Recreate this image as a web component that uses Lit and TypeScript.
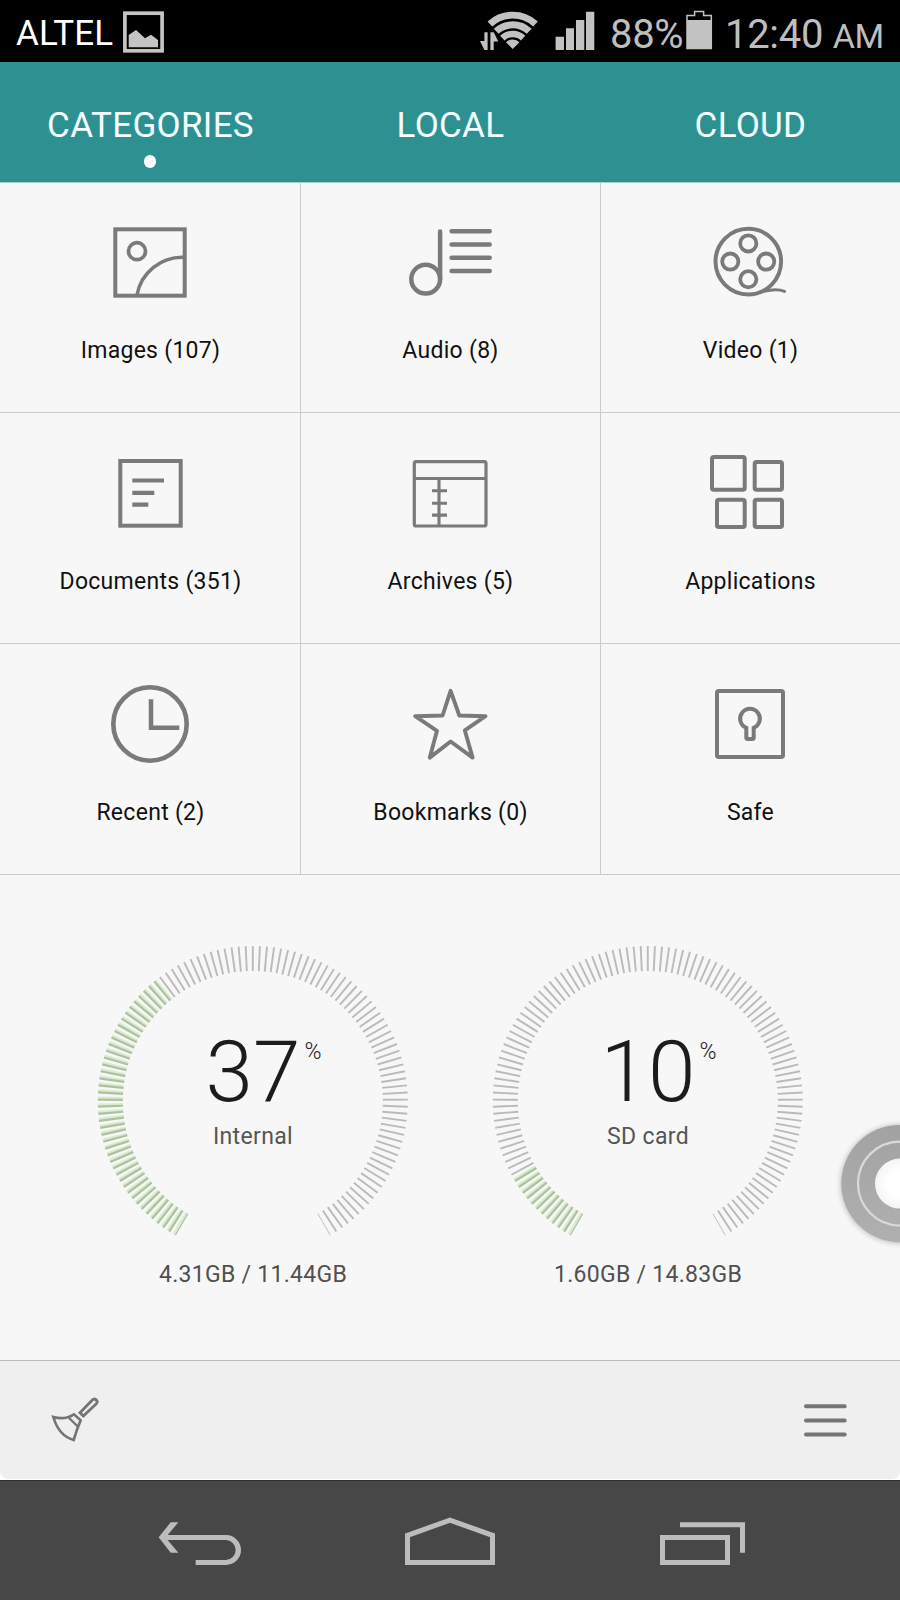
import { LitElement, html, css, svg, SVGTemplateResult } from "lit";
import { customElement, property } from "lit/decorators.js";

interface Category {
  label: string;
  box: string;
  icon: SVGTemplateResult;
}

const categories: Category[] = [
  {
    label: "Images (107)",
    box: "100 212 100 100",
    icon: svg`<rect x="115.3" y="229.3" width="69.4" height="66.4" stroke-width="4"/>
      <circle cx="137" cy="251.2" r="8.5" stroke-width="3.7"/>
      <path d="M184 257.3A46 46 0 0 0 137 295" stroke-width="3.6"/>`,
  },
  {
    label: "Audio (8)",
    box: "400 212 100 100",
    icon: svg`<g stroke-width="4.5" stroke-linecap="round"><circle cx="425.7" cy="279.2" r="14.4"/>
      <path d="M440.1 279V231.5M451.6 231.3H489.7M451.6 244.5H489.7M451.6 257.8H489.7M451.6 270.9H489.7"/></g>`,
  },
  {
    label: "Video (1)",
    box: "700 212 100 100",
    icon: svg`<circle cx="748.3" cy="261.6" r="32.8" stroke-width="4"/>
      <g stroke-width="3.8"><circle cx="748.3" cy="243.4" r="8.1"/><circle cx="730.3" cy="261.6" r="8.1"/>
      <circle cx="766.2" cy="261.6" r="8.1"/><circle cx="748.3" cy="279.3" r="8.1"/></g>
      <path d="M761 292C767 290 778 288.6 784.5 291.4" stroke-width="3" stroke-linecap="round"/>`,
  },
  {
    label: "Documents (351)",
    box: "100 443 100 100",
    icon: svg`<rect x="120.3" y="461" width="60.4" height="64.7" stroke-width="4"/>
      <path d="M132.3 480.5H164M132.3 492.8H154.3M132.3 504.7H148.3" stroke-width="4.2"/>`,
  },
  {
    label: "Archives (5)",
    box: "400 443 100 100",
    icon: svg`<rect x="414.3" y="461.7" width="71.7" height="64.3" rx="1.8" stroke-width="3.2"/>
      <path d="M414 478.5H486M439 478.5V526M432 490.8H447M432 503.3H447M432 515.1H447" stroke-width="3.1"/>`,
  },
  {
    label: "Applications",
    box: "700 443 100 100",
    icon: svg`<g stroke-width="4"><rect x="712" y="457" width="32.7" height="32.7" rx="1.8"/>
      <rect x="754.7" y="462" width="27.3" height="27.7" rx="1.8"/>
      <rect x="717" y="499.7" width="27.7" height="27.3" rx="1.8"/>
      <rect x="754.7" y="499.7" width="27.3" height="27.3" rx="1.8"/></g>`,
  },
  {
    label: "Recent (2)",
    box: "100 674 100 100",
    icon: svg`<circle cx="150" cy="724" r="36.7" stroke-width="4.6"/>
      <path d="M151 699.3V727.7H179.3" stroke-width="4.5"/>`,
  },
  {
    label: "Bookmarks (0)",
    box: "400 674 100 100",
    icon: svg`<path d="M450.6 690.8L459.3 715.5L485.5 716.2L464.8 730.3L472.6 757.6L450.6 741.5L429.8 757.6L437 730.8L415.2 716.2L442.6 715.5Z" stroke-width="3.9" stroke-linejoin="round"/>`,
  },
  {
    label: "Safe",
    box: "700 674 100 100",
    icon: svg`<rect x="717" y="691" width="66" height="66" rx="1.8" stroke-width="4"/>
      <path d="M746.3 727.9A9.9 9.9 0 1 1 753.7 727.9V737.5Q753.7 739 752.2 739H747.8Q746.3 739 746.3 737.5Z" stroke-width="4"/>`,
  },
];

@customElement("storage-gauge")
class StorageGauge extends LitElement {
  @property({ type: Number }) percent = 0;
  @property() name = "";
  @property() usage = "";

  static styles = css`
    :host { display: grid; grid-template-columns: 310px; grid-template-rows: 310px 30px; justify-items: center; }
    .dial { grid-area: 1 / 1; width: 310px; height: 310px; display: block; overflow: visible; }
    .text { grid-area: 1 / 1; text-align: center; padding-top: 76px; }
    .value { position: relative; display: inline-block; font-size: 85.5px; line-height: 100px; font-weight: 300; color: #1c1c1c; }
    .sign { position: absolute; left: 100%; top: 15px; margin-left: 4px; font-size: 23px; line-height: 30px; color: #222; }
    .name { font-size: 23px; line-height: 30px; letter-spacing: 0.35px; color: #555; }
    .usage { font-size: 23px; line-height: 30px; letter-spacing: 0.28px; color: #505050; margin-top: 4px; }
  `;

  render() {
    const steps = 114;
    const filled = Math.round((steps * this.percent) / 100);
    const ticks = Array.from({ length: steps + 1 }, (_, i) => {
      const a = ((-150 + (i * 300) / steps) * Math.PI) / 180;
      const on = i <= filled;
      const edge = i === 0 || i === steps;
      const line = (da: number, color: string, w: number) => {
        const x = Math.sin(a + da);
        const y = -Math.cos(a + da);
        return svg`<line x1=${154.8 + 130 * x} y1=${155 + 130 * y} x2=${154.8 + 155 * x} y2=${155 + 155 * y} stroke=${color} stroke-width=${w}/>`;
      };
      return on
        ? svg`${line(0.011, "#dcead2", 2.8)}${line(0, "#abc39c", edge ? 1.2 : 2.2)}`
        : line(0, "#bababa", edge ? 0.9 : 1.9);
    });
    return html`
      <svg class="dial" viewBox="0 0 310 310">${ticks}</svg>
      <div class="text">
        <div class="value">${this.percent}<span class="sign">%</span></div>
        <div class="name">${this.name}</div>
      </div>
      <div class="usage">${this.usage}</div>
    `;
  }
}

@customElement("app-root")
class AppRoot extends LitElement {
  static styles = css`
    :host { display: block; width: 900px; height: 1600px; overflow: hidden; position: relative; font-family: Roboto, "Liberation Sans", sans-serif; background: #f7f7f7; }
    svg { display: block; flex: none; }
    .status { height: 62px; background: #000; display: flex; box-sizing: border-box; padding-left: 16px; color: #bebebe; line-height: 62px; white-space: nowrap; }
    .carrier { width: 106px; font-size: 35px; color: #fff; letter-spacing: 0.1px; padding-top: 3px; box-sizing: border-box; }
    .shot { width: 44px; margin-right: 312px; }
    .signals { width: 132px; }
    .pct { width: 75px; font-size: 40px; padding-top: 4px; letter-spacing: -0.3px; }
    .battery { width: 30px; }
    .clock { font-size: 40px; padding-top: 4px; letter-spacing: -0.3px; margin-left: 10px; }
    .ampm { font-size: 34px; }
    .tabs { height: 120px; background: #2d9192; box-shadow: 0 1px #a5cfcf; position: relative; display: grid; grid-template-columns: repeat(3, 1fr); justify-items: center; color: #f4ffff; font-size: 35px; }
    .tab { display: flex; flex-direction: column; align-items: center; padding: 43px 0 0 1px; line-height: 41px; letter-spacing: 0.3px; }
    .dot { width: 12.6px; height: 12.6px; border-radius: 50%; background: #fff; margin: 9px 1px 0 0; }
    .grid { display: grid; grid-template-columns: repeat(3, 300px); grid-auto-rows: 231px; }
    .cell { display: flex; flex-direction: column; align-items: center; padding-top: 30px; box-shadow: inset 1px 0 #cbcbcb, inset 0 -1px #cbcbcb; color: #111; }
    .cell:nth-child(3n + 1) { box-shadow: inset 0 -1px #cbcbcb; }
    .icon { width: 100px; height: 100px; fill: none; stroke: #7a7a7a; }
    .label { font-size: 23px; line-height: 30px; letter-spacing: 0.28px; padding-left: 1px; margin-top: 24px; }
    .storage { height: 485px; box-sizing: border-box; padding: 71px 0 0 98px; display: flex; gap: 85px; background: #f7f7f7; align-items: flex-start; }
    .bar-wrap { height: 120px; background: #fff; }
    .bar { height: 119px; box-sizing: border-box; border-top: 1px solid #b9bcba; border-radius: 0 0 8px 8px; background: #efefef; display: flex; justify-content: space-between; padding: 0 40px; align-items: center; }
    .nav { height: 120px; box-sizing: border-box; border-top: 1px solid #303030; background: #474747; display: grid; grid-template-columns: repeat(3, 250px); justify-content: center; justify-items: center; }
    .bubble { position: absolute; left: 828px; top: 1111px; }
  `;

  render() {
    return html`
      <div class="status">
        <div class="carrier">ALTEL</div>
        <svg class="shot" width="44" height="62" viewBox="122 0 44 62">
          <rect x="124.9" y="13.2" width="37.2" height="37.6" fill="none" stroke="#c4c4c4" stroke-width="3.7"/>
          <path d="M128.7 35L136 30L145 38.3L151 34.7L158 40V47.3H128.7Z" fill="#c4c4c4"/>
        </svg>
        <svg class="signals" width="132" height="62" viewBox="478 0 132 62" fill="#c2c2c2">
          <g fill="none" stroke="#c2c2c2" stroke-width="6.9">
            <path d="M489.9 24A33.8 33.8 0 0 1 535.5 24"/>
            <path d="M496.2 31.3A24.2 24.2 0 0 1 529.2 31.3"/>
            <path d="M502.3 38.1A15.1 15.1 0 0 1 523.1 38.1" stroke-width="6.4"/>
          </g>
          <path d="M512.7 49L506 42.3A9.3 9.3 0 0 1 519.4 42.3Z"/>
          <path d="M484.4 32.3H487.6V50H484.4L480 41H484.4ZM490.4 32.3H493.7L498.3 41.4H493.7V50H490.4Z"/>
          <path d="M555.6 36.7H564V50H555.6ZM566 28.3H574V50H566ZM576 20H584.3V50H576ZM586 11.7H594.3V50H586Z"/>
        </svg>
        <div class="pct">88%</div>
        <svg class="battery" width="30" height="62" viewBox="685 0 30 62">
          <path d="M687 48.5V15.4H694.6V11.4H703.6V15.4H711.3V48.5Z" fill="none" stroke="#c2c2c2" stroke-width="1.5"/>
          <path d="M687 20H711.3V48.5H687Z" fill="#c2c2c2"/>
        </svg>
        <div class="clock">12:40 <span class="ampm">AM</span></div>
      </div>
      <div class="tabs">
        <div class="tab">CATEGORIES<span class="dot"></span></div>
        <div class="tab">LOCAL</div>
        <div class="tab">CLOUD</div>
      </div>
      <div class="grid">
        ${categories.map(
          (c) => html`<div class="cell"><svg class="icon" viewBox=${c.box}>${c.icon}</svg><div class="label">${c.label}</div></div>`
        )}
      </div>
      <div class="storage">
        <storage-gauge .percent=${37} .name=${"Internal"} .usage=${"4.31GB / 11.44GB"}></storage-gauge>
        <storage-gauge .percent=${10} .name=${"SD card"} .usage=${"1.60GB / 14.83GB"}></storage-gauge>
      </div>
      <div class="bar-wrap">
        <div class="bar">
          <svg width="70" height="60" viewBox="120 150 210 180" fill="none" stroke="#747474" stroke-linejoin="miter">
            <path d="M240 218L277 180A8 8 0 0 1 289 191L250 228Z" stroke-width="8.5"/>
            <path d="M160 231Q195 241 222 223L242 241L232 266L221 300Q176 287 160 231Z" stroke-width="8"/>
            <path d="M207 234L234 260" stroke-width="7"/>
          </svg>
          <svg width="70" height="60" viewBox="790 1390 70 60" stroke="#757575" stroke-width="4" stroke-linecap="round">
            <path d="M806 1406.2H844.7M806 1420.4H844.7M806 1434.6H844.7"/>
          </svg>
        </div>
      </div>
      <div class="nav">
        <svg width="120" height="119" viewBox="420 423 360 357" fill="#bcbcbc">
          <path d="M476 592L512 547H535L503 585H678A45 45 0 0 1 678 675H587V660H677A30 30 0 0 0 677 600H503L535 638H512Z"/>
        </svg>
        <svg width="120" height="119" viewBox="1170 423 360 357" fill="none" stroke="#bcbcbc" stroke-width="15">
          <path d="M1222.5 586L1350 540.5L1477.5 586V667.5H1222.5Z"/>
        </svg>
        <svg width="120" height="119" viewBox="570 423 360 357" fill="none" stroke="#bcbcbc" stroke-width="15">
          <path d="M637.5 592.5H832.5V667.5H637.5ZM690 554.5H877.5V638"/>
        </svg>
      </div>
      <svg class="bubble" width="72" height="144" viewBox="828 1111 72 144">
        <defs>
          <linearGradient id="g" x1="0" y1="0" x2="0" y2="1"><stop offset="0" stop-color="#a2a2a2"/><stop offset="1" stop-color="#b0b0b0"/></linearGradient>
          <radialGradient id="w"><stop offset="0.5" stop-color="#fff"/><stop offset="1" stop-color="#f4f4f4"/></radialGradient>
          <filter id="s" x="-20%" y="-20%" width="140%" height="140%"><feGaussianBlur stdDeviation="3"/></filter>
        </defs>
        <circle cx="900" cy="1184" r="58.5" fill="#000" opacity="0.3" filter="url(#s)"/>
        <circle cx="900" cy="1183.6" r="58.7" fill="url(#g)"/>
        <circle cx="900" cy="1183.6" r="42" fill="none" stroke="#d9d9d9" stroke-width="2.2"/>
        <circle cx="900" cy="1183.6" r="25" fill="url(#w)"/>
      </svg>
    `;
  }
}
